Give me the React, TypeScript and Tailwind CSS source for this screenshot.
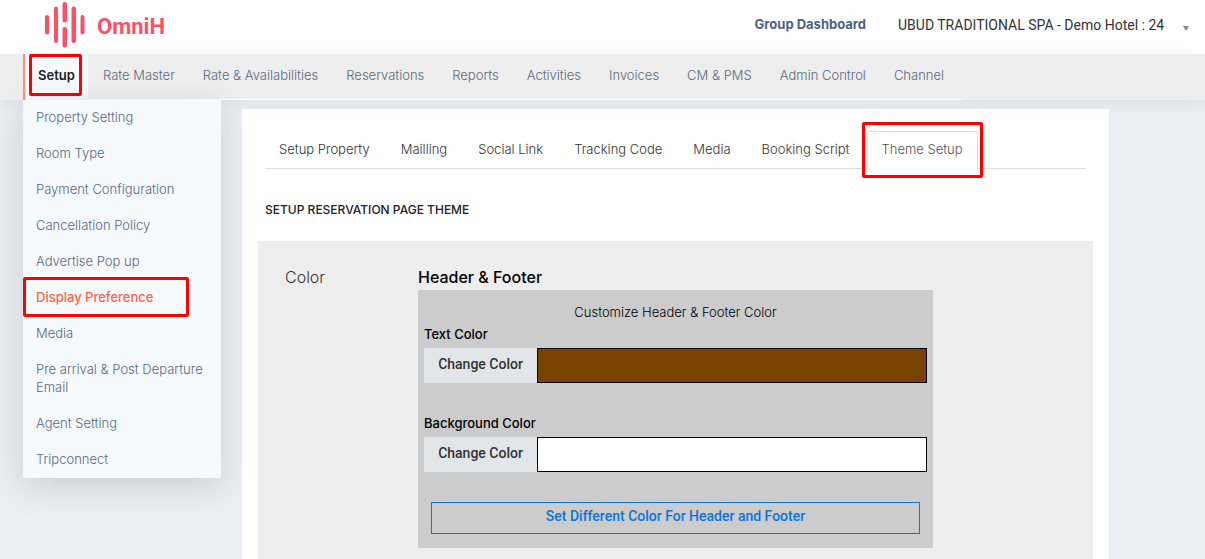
const navItems = [
  'Rate Master',
  'Rate & Availabilities',
  'Reservations',
  'Reports',
  'Activities',
  'Invoices',
  'CM & PMS',
  'Admin Control',
  'Channel',
];

const menuItems = [
  'Property Setting',
  'Room Type',
  'Payment Configuration',
  'Cancellation Policy',
  'Advertise Pop up',
  'Display Preference',
  'Media',
  'Pre arrival & Post Departure Email',
  'Agent Setting',
  'Tripconnect',
];

const tabs = [
  'Setup Property',
  'Mailling',
  'Social Link',
  'Tracking Code',
  'Media',
  'Booking Script',
  'Theme Setup',
];

function Highlight({ className }: { className: string }) {
  return (
    <span
      aria-hidden="true"
      className={`pointer-events-none absolute z-20 rounded-[2px] border-3 border-[#ff0000] ${className}`}
    />
  );
}

function Logo() {
  return (
    <a href="#" className="flex items-center gap-3">
      <svg width="40" height="46" viewBox="0 0 40 46" fill="#fb5168" aria-hidden="true">
        <rect x="0" y="13" width="4" height="19.500" rx="2" />
        <rect x="9" y="4.500" width="4" height="36.500" rx="2" />
        <rect x="17.500" y="0" width="4.500" height="20.500" rx="2.200" />
        <rect x="17.500" y="25" width="4.500" height="20.500" rx="2.200" />
        <rect x="26.500" y="4.500" width="4.500" height="36.500" rx="2.200" />
        <rect x="35.500" y="13" width="4" height="19.500" rx="2" />
      </svg>
      <span className="pt-1 font-[Roboto,sans-serif] text-[22px] leading-6 font-bold text-[#fb5168]">OmniH</span>
    </a>
  );
}

function ColorField({ id, label, swatch }: { id: string; label: string; swatch: string }) {
  return (
    <div>
      <label htmlFor={id} className="block h-6 text-[13px] leading-5 font-medium text-black">
        {label}
      </label>
      <div className="flex h-[35px]">
        <button
          type="button"
          className="w-[113px] bg-[#e2e6e9] pb-1 font-[Roboto,sans-serif] text-sm font-medium text-[#333]"
        >
          Change Color
        </button>
        <input id={id} type="text" readOnly className={`min-w-0 flex-1 border border-black ${swatch}`} />
      </div>
    </div>
  );
}

export default function App() {
  return (
    <div className="flex h-screen flex-col overflow-hidden bg-[#ebeff4] font-[Inter,sans-serif] text-[13px] text-[#333]">
      <header className="flex h-[54px] shrink-0 items-center bg-white pr-4 pb-1 pl-[45px]">
        <Logo />
        <a href="#" className="ml-auto text-[13px] font-bold text-[#4d627f]">
          Group Dashboard
        </a>
        <div className="relative ml-8 flex items-center">
          <select
            aria-label="Hotel"
            className="appearance-none bg-transparent pr-6 font-[Roboto,sans-serif] text-sm font-normal text-[#333]"
          >
            <option>UBUD TRADITIONAL SPA - Demo Hotel : 24</option>
          </select>
          <svg className="pointer-events-none absolute right-0 bottom-1" width="6" height="5" viewBox="0 0 6 5" fill="#888" aria-hidden="true">
            <path d="M0 0h6L3 5z" />
          </svg>
        </div>
      </header>

      <nav className="relative z-10 flex h-[46px] shrink-0 bg-[#eee] pl-[23px] shadow-[0_4px_16px_rgba(0,0,0,0.06)]">
        <a
          href="#"
          className="relative z-20 flex w-[65px] items-center border-l-2 border-[#ff8f70] bg-[#f6fafd] pb-0.5 pl-[13px] font-semibold text-[#222]"
        >
          Setup
          <Highlight className="top-0 left-1 h-[42px] w-[53px]" />
        </a>
        <div className="flex items-center gap-7 border-b border-white pr-[18px] pb-0.5 pl-[15px] font-light whitespace-nowrap text-[#5b6880]">
          {navItems.map((item) => (
            <a key={item} href="#">
              {item}
            </a>
          ))}
        </div>
      </nav>

      <div className="flex min-h-0 flex-1 items-start gap-[21px] pr-24 pl-[23px]">
        <aside className="relative z-10 w-[198px] shrink-0 bg-[#f6fafd] shadow-[0_8px_32px_rgba(0,0,0,0.14)]">
          <ul>
            {menuItems.map((item) => (
              <li key={item} className="relative">
                <a
                  href="#"
                  className={`block pt-2 pr-3 pb-2.5 pl-[13px] leading-[18px] ${
                    item === 'Display Preference' ? 'font-medium text-[#ff6347]' : 'font-light text-[#5b6880]'
                  }`}
                >
                  {item}
                </a>
                {item === 'Display Preference' && <Highlight className="-top-[3px] left-0 h-10 w-[166px]" />}
              </li>
            ))}
          </ul>
        </aside>

        <main className="mt-[9px] flex min-w-0 flex-1 flex-col self-stretch bg-white px-4 pt-[22px]">
          <div role="tablist" className="mx-[7px] flex h-[38px] gap-[3px] border-b border-[#ddd] font-light">
            {tabs.map((tab) =>
              tab === 'Theme Setup' ? (
                <div key={tab} className="relative -mb-px">
                  <button
                    role="tab"
                    aria-selected="true"
                    type="button"
                    className="h-full rounded-t-[3px] border border-b-0 border-[#ddd] bg-white px-3.5 pb-0.5 text-[#555]"
                  >
                    {tab}
                  </button>
                  <Highlight className="-inset-x-[5px] -top-[9px] -bottom-[9px]" />
                </div>
              ) : (
                <button key={tab} role="tab" aria-selected="false" type="button" className="px-3.5">
                  {tab}
                </button>
              ),
            )}
          </div>

          <h1 className="mx-[7px] mt-8 text-xs leading-[18px] font-medium text-[#222]">SETUP RESERVATION PAGE THEME</h1>

          <section className="mt-[22px] flex flex-1 bg-[#eee] pt-6 pl-[27px]">
            <h2 className="w-[133px] shrink-0 text-base leading-6 font-light">Color</h2>
            <div className="w-full max-w-[515px]">
              <h3 className="text-base leading-[25px] font-medium text-black">Header &amp; Footer</h3>
              <div className="bg-[#ccc] px-1.5 pt-3 pb-3.5">
                <p className="mb-[2px] text-center leading-5 font-light text-black">Customize Header &amp; Footer Color</p>
                <ColorField id="text-color" label="Text Color" swatch="bg-[#784200]" />
                <div className="mt-[30px]">
                  <ColorField id="background-color" label="Background Color" swatch="bg-white" />
                </div>
                <div className="px-[7px] pt-[30px]">
                  <button
                    type="button"
                    className="h-8 w-full border border-[#0b75d8] pb-1 font-[Roboto,sans-serif] text-sm font-medium text-[#0b75d8]"
                  >
                    Set Different Color For Header and Footer
                  </button>
                </div>
              </div>
            </div>
          </section>
        </main>
      </div>
    </div>
  );
}
